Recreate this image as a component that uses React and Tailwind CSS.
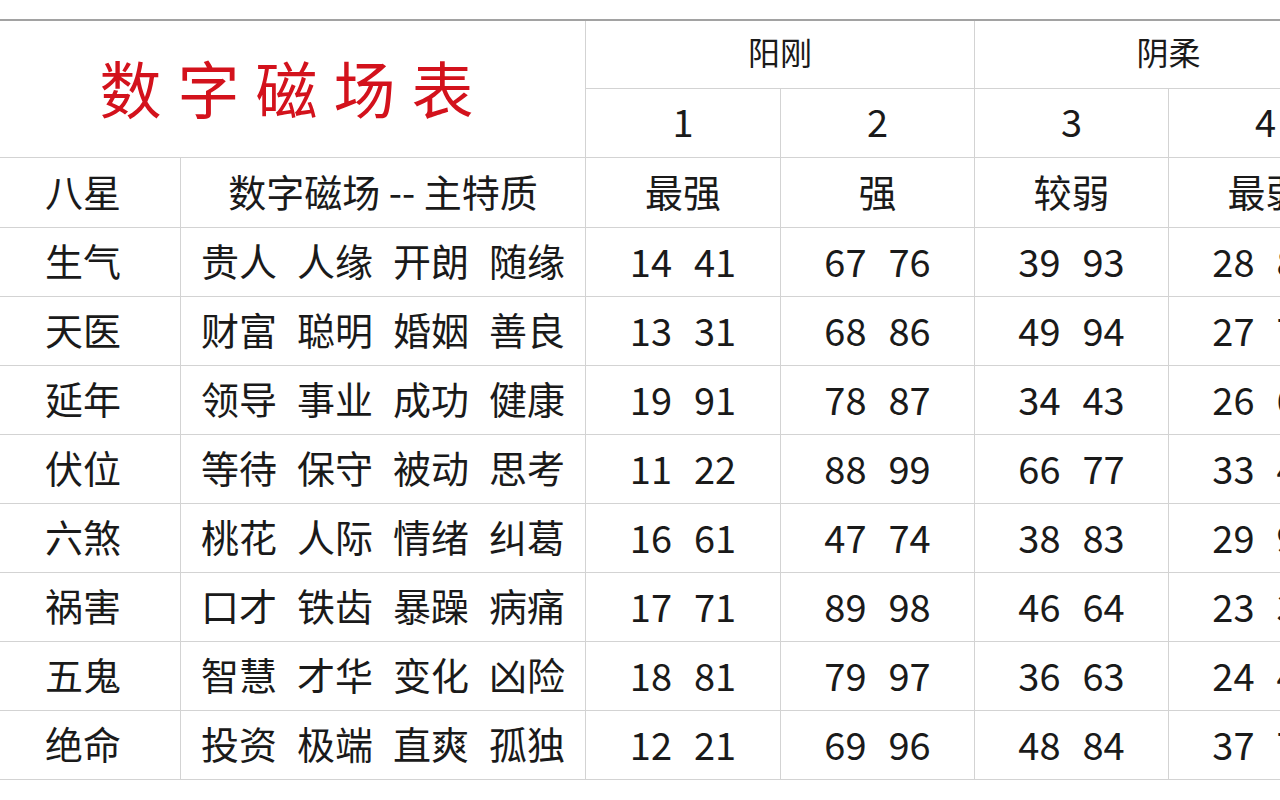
import React from "react";

const rows = [
  ["生气", ["贵人", "人缘", "开朗", "随缘"], ["14", "41"], ["67", "76"], ["39", "93"], ["28", "82"]],
  ["天医", ["财富", "聪明", "婚姻", "善良"], ["13", "31"], ["68", "86"], ["49", "94"], ["27", "72"]],
  ["延年", ["领导", "事业", "成功", "健康"], ["19", "91"], ["78", "87"], ["34", "43"], ["26", "62"]],
  ["伏位", ["等待", "保守", "被动", "思考"], ["11", "22"], ["88", "99"], ["66", "77"], ["33", "44"]],
  ["六煞", ["桃花", "人际", "情绪", "纠葛"], ["16", "61"], ["47", "74"], ["38", "83"], ["29", "92"]],
  ["祸害", ["口才", "铁齿", "暴躁", "病痛"], ["17", "71"], ["89", "98"], ["46", "64"], ["23", "32"]],
  ["五鬼", ["智慧", "才华", "变化", "凶险"], ["18", "81"], ["79", "97"], ["36", "63"], ["24", "42"]],
  ["绝命", ["投资", "极端", "直爽", "孤独"], ["12", "21"], ["69", "96"], ["48", "84"], ["37", "73"]],
];

const cell = "bg-white flex items-center justify-center";
const body = cell + " pb-[4px]";

function Pair({ v }) {
  return (
    <div className={cell + " gap-[22px] pb-[2px]"}>
      <span>{v[0]}</span>
      <span>{v[1]}</span>
    </div>
  );
}

export default function App() {
  return (
    <div
      className="w-[1280px] h-[800px] bg-white overflow-hidden text-[#1a1a1a] text-[38px] leading-none"
      style={{ fontFamily: '"Noto Sans CJK SC", "Noto Sans", sans-serif' }}
    >
      <div className="pt-[19px] ml-[-14px]">
        <div className="border-t-2 border-[#a2a2a2]">
          <div className="grid grid-cols-[194px_404px_194px_193px_193px_193px] grid-rows-[67px_68px_69px_repeat(8,68px)] gap-px bg-[#d3d3d3] pb-px w-max">
            <div className={cell + " col-span-2 row-span-2 pb-[5px]"}>
              <span className="text-[#d3121c] text-[62px] tracking-[16px] pl-[18px]">数字磁场表</span>
            </div>
            <div className={cell + " col-span-2 pb-[7px]"}>
              <span className="text-[32px]">阳刚</span>
            </div>
            <div className={cell + " col-span-2 pb-[7px]"}>
              <span className="text-[32px]">阴柔</span>
            </div>
            <div className={cell + " pb-[5px]"}>1</div>
            <div className={cell + " pb-[5px]"}>2</div>
            <div className={cell + " pb-[5px]"}>3</div>
            <div className={cell + " pb-[5px]"}>4</div>

            <div className={body}>八星</div>
            <div className={body}>数字磁场 -- 主特质</div>
            <div className={body}>最强</div>
            <div className={body}>强</div>
            <div className={body}>较弱</div>
            <div className={body}>最弱</div>

            {rows.map((r) => (
              <React.Fragment key={r[0]}>
                <div className={body}>{r[0]}</div>
                <div className={body + " gap-[20px]"}>
                  {r[1].map((t) => (
                    <span key={t}>{t}</span>
                  ))}
                </div>
                <Pair v={r[2]} />
                <Pair v={r[3]} />
                <Pair v={r[4]} />
                <Pair v={r[5]} />
              </React.Fragment>
            ))}
          </div>
        </div>
      </div>
    </div>
  );
}
